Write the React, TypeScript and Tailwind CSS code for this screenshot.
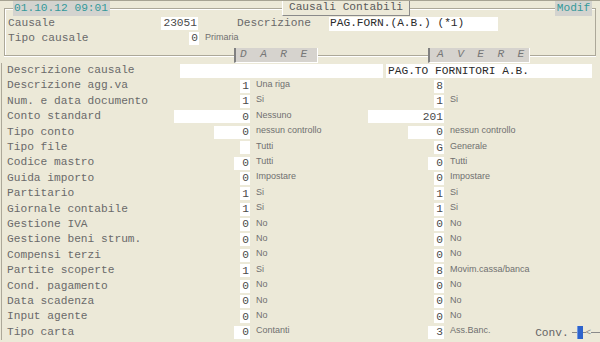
import React from "react";

const MONO = "font-['Liberation_Mono','Courier_New',monospace]";
const SANS = "font-['Liberation_Sans',Arial,sans-serif]";

type R = {
  label: string;
  d: string;
  dw: string;
  dl: string;
  a: string;
  aw: string;
  al: string;
};

const rows: R[] = [
  { label: "Descrizione agg.va", d: "1", dw: "w-[10px]", dl: "Una riga", a: "8", aw: "w-[10px]", al: "" },
  { label: "Num. e data documento", d: "1", dw: "w-[10px]", dl: "Si", a: "1", aw: "w-[10px]", al: "Si" },
  { label: "Conto standard", d: "0", dw: "w-[76px]", dl: "Nessuno", a: "201", aw: "w-[76px]", al: "" },
  { label: "Tipo conto", d: "0", dw: "w-[36px]", dl: "nessun controllo", a: "0", aw: "w-[36px]", al: "nessun controllo" },
  { label: "Tipo file", d: "", dw: "w-[10px]", dl: "Tutti", a: "G", aw: "w-[10px]", al: "Generale" },
  { label: "Codice mastro", d: "0", dw: "w-[16px]", dl: "Tutti", a: "0", aw: "w-[16px]", al: "Tutti" },
  { label: "Guida importo", d: "0", dw: "w-[10px]", dl: "Impostare", a: "0", aw: "w-[10px]", al: "Impostare" },
  { label: "Partitario", d: "1", dw: "w-[10px]", dl: "Si", a: "1", aw: "w-[10px]", al: "Si" },
  { label: "Giornale contabile", d: "1", dw: "w-[10px]", dl: "Si", a: "1", aw: "w-[10px]", al: "Si" },
  { label: "Gestione IVA", d: "0", dw: "w-[10px]", dl: "No", a: "0", aw: "w-[10px]", al: "No" },
  { label: "Gestione beni strum.", d: "0", dw: "w-[10px]", dl: "No", a: "0", aw: "w-[10px]", al: "No" },
  { label: "Compensi terzi", d: "0", dw: "w-[10px]", dl: "No", a: "0", aw: "w-[10px]", al: "No" },
  { label: "Partite scoperte", d: "1", dw: "w-[10px]", dl: "Si", a: "8", aw: "w-[10px]", al: "Movim.cassa/banca" },
  { label: "Cond. pagamento", d: "0", dw: "w-[10px]", dl: "No", a: "0", aw: "w-[10px]", al: "No" },
  { label: "Data scadenza", d: "0", dw: "w-[10px]", dl: "No", a: "0", aw: "w-[10px]", al: "No" },
  { label: "Input agente", d: "0", dw: "w-[10px]", dl: "No", a: "0", aw: "w-[10px]", al: "No" },
  { label: "Tipo carta", d: "0", dw: "w-[16px]", dl: "Contanti", a: "3", aw: "w-[16px]", al: "Ass.Banc." },
];

function Box({ w, children }: { w: string; children?: React.ReactNode }) {
  return (
    <span className={`${w} flex h-[13px] shrink-0 items-center justify-end bg-white pr-[1px] pt-[1px] text-[#4a4a4a]`}>
      {children}
    </span>
  );
}

function Small({ children, cls = "" }: { children?: React.ReactNode; cls?: string }) {
  return (
    <span className={`${SANS} ${cls} mb-[3px] whitespace-nowrap text-[9px] leading-none text-[#707070]`}>
      {children}
    </span>
  );
}

function Seg({ w }: { w: string }) {
  return <span className={`${w} h-[2px] border-t border-b border-t-[#aca899] border-b-white`} />;
}

function Conv() {
  return (
    <span className="flex items-center">
      <span className="mt-[2px] leading-none text-[#666]">Conv.</span>
      <span className="ml-[3px] w-[5px] border-t border-[#8a8a8a]" />
      <span className="h-[13px] w-[6px] bg-[#2e63cc] shadow-[inset_1px_0_0_#6f97e0]" />
      <span className="w-[3px] border-t border-[#8a8a8a]" />
      <span className={`${SANS} text-[9px] leading-none text-[#8a8a8a]`}>&lt;</span>
      <span className="w-[9px] border-t border-[#8a8a8a]" />
    </span>
  );
}

export default function App() {
  return (
    <div className={`${MONO} h-[342px] w-[600px] overflow-hidden border-t border-[#a6a393] bg-[#ece9d8] text-[11.2px] leading-none text-[#6a6a6a]`}>
      {/* top group */}
      <div className="mx-[4px] mt-[7px] h-[48px] border-t border-l border-r border-[#aca899] shadow-[inset_1px_1px_0_#fff]">
        <div className="-mt-[8px] flex h-[15px] items-stretch">
          <span className="ml-[8px] flex w-[97px] items-center bg-[#d3d3cf] pl-[1px] text-[#35999a]">01.10.12 09:01</span>
          <span className="ml-[172px] flex w-[128px] items-center justify-center border-l border-r border-b border-l-white border-r-[#8a8a8a] border-b-[#8a8a8a] bg-[#ece9d8] text-[#5a5a5a]">
            Causali Contabili
          </span>
          <span className="ml-[145px] flex w-[37px] items-center justify-center bg-[#d3d3cf] text-[#35999a]">Modif</span>
        </div>
        <div className="pl-[3px]">
          <div className="flex h-[15px] items-center">
            <span className="w-[153px]">Causale</span>
            <Box w="w-[37px]">23051</Box>
            <span className="ml-[39px] w-[92px]">Descrizione</span>
            <span className="flex h-[14px] w-[169px] items-center bg-white pl-[1px] pt-[1px] text-[#2a2a2a]">PAG.FORN.(A.B.) (*1)</span>
          </div>
          <div className="flex h-[15px] items-center">
            <span className="w-[181px]">Tipo causale</span>
            <Box w="w-[10px]">0</Box>
            <Small cls="ml-[6px]">Primaria</Small>
          </div>
        </div>
      </div>

      {/* DARE / AVERE separator */}
      <div className="mx-[4px] -mt-[8px] flex h-[15px] items-center">
        <Seg w="w-[230px]" />
        <span className="flex h-[15px] w-[84px] items-center whitespace-pre border-l-2 border-r border-b border-l-[#808080] border-r-white border-b-white bg-[#d6d3ce] pl-[4px] italic text-[#777]">
          {"D  A  R  E"}
        </span>
        <Seg w="w-[110px]" />
        <span className="flex h-[15px] w-[102px] items-center whitespace-pre border-l-2 border-r border-b border-l-[#808080] border-r-white border-b-white bg-[#d6d3ce] pl-[7px] italic text-[#777]">
          {"A  V  E  R  E"}
        </span>
        <Seg w="flex-1" />
      </div>

      {/* lower group */}
      <div className="ml-[1px] border-l border-[#aca899] pl-[5px]">
        <div className="flex h-[15.4px] items-center">
          <span className="w-[173px]">Descrizione causale</span>
          <span className="h-[14px] w-[203px] bg-white" />
          <span className="ml-[3px] flex h-[14px] w-[206px] items-center bg-white pl-[2px] pt-[1px] text-[#2a2a2a]">
            PAG.TO FORNITORI A.B.
          </span>
        </div>
        {rows.map((r, i) => (
          <div key={i} className="flex h-[15.4px] items-center">
            <div className="flex w-[243px] items-center justify-between">
              <span className="whitespace-pre">{r.label}</span>
              <Box w={r.dw}>{r.d}</Box>
            </div>
            <div className="flex w-[194px] items-center justify-between">
              <Small cls="ml-[6px]">{r.dl}</Small>
              <Box w={r.aw}>{r.a}</Box>
            </div>
            <div className="flex flex-1 items-center justify-between">
              <Small cls="ml-[6px]">{r.al}</Small>
              {i === rows.length - 1 ? <Conv /> : null}
            </div>
          </div>
        ))}
      </div>
    </div>
  );
}
